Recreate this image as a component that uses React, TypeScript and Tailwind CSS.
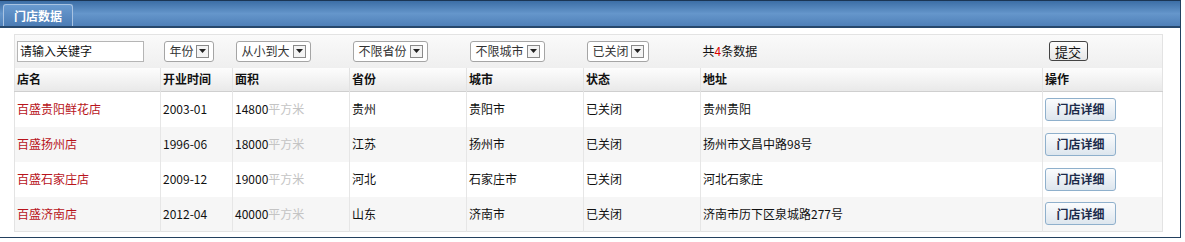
import React from 'react';

const stores = [
  { name: '百盛贵阳鲜花店', date: '2003-01', area: '14800', province: '贵州', city: '贵阳市', status: '已关闭', address: '贵州贵阳' },
  { name: '百盛扬州店', date: '1996-06', area: '18000', province: '江苏', city: '扬州市', status: '已关闭', address: '扬州市文昌中路98号' },
  { name: '百盛石家庄店', date: '2009-12', area: '19000', province: '河北', city: '石家庄市', status: '已关闭', address: '河北石家庄' },
  { name: '百盛济南店', date: '2012-04', area: '40000', province: '山东', city: '济南市', status: '已关闭', address: '济南市历下区泉城路277号' },
];

function FakeSelect({ label, width }: { label: string; width: string }) {
  return (
    <div
      className={`flex h-[21px] ${width} items-center justify-between rounded-[3px] border border-[#a5a5a5] bg-white pl-[5px] pr-[4px] text-[12px] text-[#333]`}
    >
      <span>{label}</span>
      {/* dropdown arrow box */}
      <span className="flex h-[13px] w-[13px] items-center justify-center border border-[#8a8a8a] bg-[#f4f4f4]">
        <svg width="7" height="4" viewBox="0 0 7 4">
          <path d="M0 0h7L3.5 4z" fill="#222" />
        </svg>
      </span>
    </div>
  );
}

function DetailButton() {
  return (
    <button className="h-[23px] w-[71px] rounded-[3px] border border-[#8fb0cc] bg-gradient-to-b from-[#fbfcfd] to-[#dde6ee] text-[12px] font-bold text-[#1c2b4a]">
      门店详细
    </button>
  );
}

export default function App() {
  return (
    <div
      className="h-[242px] w-[1185px] bg-white"
      style={{ fontFamily: '"Noto Sans CJK SC", "Liberation Sans", sans-serif' }}
    >
      <div className="h-[238px] w-[1181px] border border-l-0 border-[#23405e] border-t-[#1b3554]">
        {/* Title bar */}
        <div className="flex h-[27px] items-end border-b-2 border-[#27486c] bg-gradient-to-b from-[#3c6ea6] via-[#6596cb] to-[#4f80b8] pl-[3px]">
          <div className="flex h-[22px] w-[70px] items-center justify-center rounded-t-[3px] border border-b-0 border-[#a8c3e2] bg-gradient-to-b from-[#6a9bd0] to-[#4b7cb5] text-[12px] font-bold text-white">
            门店数据
          </div>
        </div>

        {/* Table area */}
        <div className="pl-[14px] pt-[6px]">
          <table className="w-[1148px] table-fixed border-collapse border border-[#e3e3e3] text-[12px] text-[#111]">
            <colgroup>
              <col className="w-[146px]" />
              <col className="w-[72px]" />
              <col className="w-[117px]" />
              <col className="w-[117px]" />
              <col className="w-[117px]" />
              <col className="w-[117px]" />
              <col className="w-[342px]" />
              <col className="w-[120px]" />
            </colgroup>
            <tbody>
              {/* filter row */}
              <tr className="h-[33px] bg-gradient-to-b from-[#fafafa] to-[#efefef]">
                <td className="px-[2px]">
                  <div className="flex h-[21px] w-[127px] items-center border border-[#b5b5b5] bg-white pl-[2px] text-[12px] text-[#111]">
                    请输入关键字
                  </div>
                </td>
                <td className="px-[3px]">
                  <FakeSelect label="年份" width="w-[50px]" />
                </td>
                <td className="px-[3px]">
                  <FakeSelect label="从小到大" width="w-[75px]" />
                </td>
                <td className="px-[3px]">
                  <FakeSelect label="不限省份" width="w-[75px]" />
                </td>
                <td className="px-[3px]">
                  <FakeSelect label="不限城市" width="w-[75px]" />
                </td>
                <td className="px-[3px]">
                  <FakeSelect label="已关闭" width="w-[62px]" />
                </td>
                <td className="px-[2px]">
                  共<span className="text-[#d00]">4</span>条数据
                </td>
                <td className="px-[6px]">
                  <button className="h-[20px] w-[39px] rounded-[3px] border border-[#444] bg-gradient-to-b from-[#fdfdfd] to-[#e6e6e6] text-[13px] leading-none text-[#111]">
                    提交
                  </button>
                </td>
              </tr>

              {/* header row */}
              <tr className="h-[24px] border-b border-[#cfcfcf] bg-gradient-to-b from-[#fdfdfd] to-[#e9e9e9] font-bold">
                {['店名', '开业时间', '面积', '省份', '城市', '状态', '地址', '操作'].map((h) => (
                  <td key={h} className="border-l border-[#e2e2e2] px-[2px] first:border-l-0">
                    {h}
                  </td>
                ))}
              </tr>

              {stores.map((s, i) => (
                <tr key={s.name} className={`h-[35px] ${i % 2 === 1 ? 'bg-[#f6f6f6]' : 'bg-white'}`}>
                  <td className="px-[2px] text-[#b8141c]">{s.name}</td>
                  <td className="border-l border-[#e6e6e6] px-[2px]">{s.date}</td>
                  <td className="border-l border-[#e6e6e6] px-[2px]">
                    {s.area}
                    <span className="text-[#c4c4c4]">平方米</span>
                  </td>
                  <td className="border-l border-[#e6e6e6] px-[2px]">{s.province}</td>
                  <td className="border-l border-[#e6e6e6] px-[2px]">{s.city}</td>
                  <td className="border-l border-[#e6e6e6] px-[2px]">{s.status}</td>
                  <td className="border-l border-[#e6e6e6] px-[2px]">{s.address}</td>
                  <td className="border-l border-[#e6e6e6] px-[2px]">
                    <DetailButton />
                  </td>
                </tr>
              ))}
            </tbody>
          </table>
        </div>
      </div>
    </div>
  );
}
